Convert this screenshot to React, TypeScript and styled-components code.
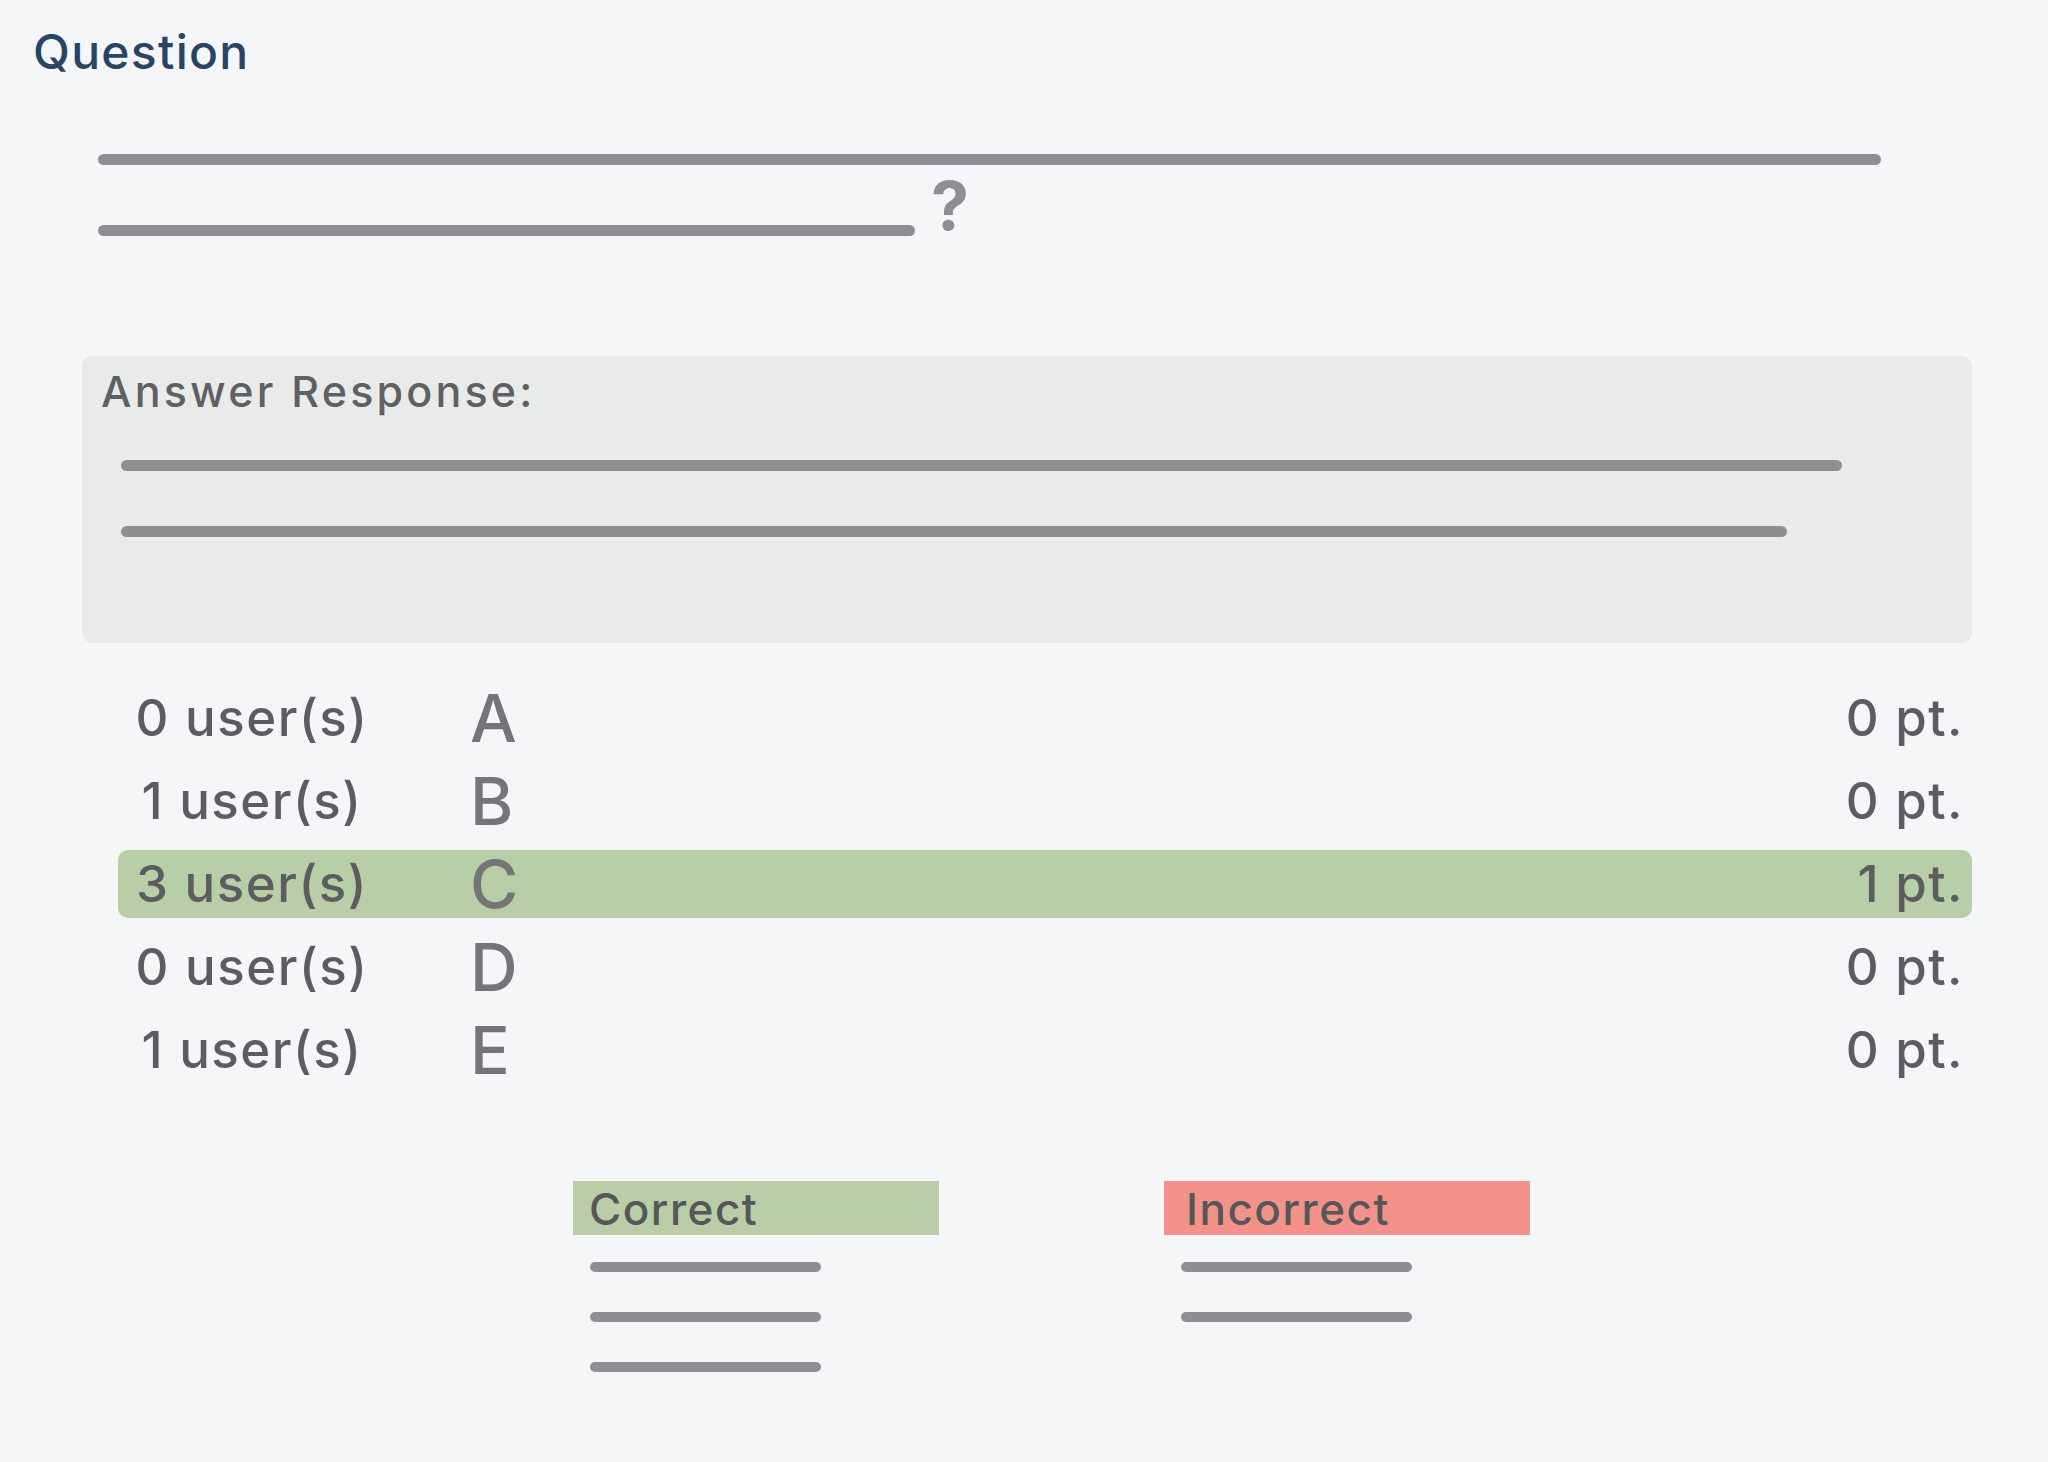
import React from 'react'
import styled, { createGlobalStyle } from 'styled-components'

const GlobalStyle = createGlobalStyle`
  html, body {
    margin: 0;
    padding: 0;
    background: #F5F6F8;
  }
  body {
    font-family: Inter, "Noto Sans", "Liberation Sans", sans-serif;
  }
`

const Data = [
  { users: '0 user(s)', letter: 'A', pts: '0 pt.', correct: false },
  { users: '1 user(s)', letter: 'B', pts: '0 pt.', correct: false },
  { users: '3 user(s)', letter: 'C', pts: '1 pt.', correct: true },
  { users: '0 user(s)', letter: 'D', pts: '0 pt.', correct: false },
  { users: '1 user(s)', letter: 'E', pts: '0 pt.', correct: false },
]

const App: React.FC = () => {
  return (
    <>
      <GlobalStyle />
      <Page>
        <Title>Question</Title>
        <QuestionBlock>
          <Bar w={1783} />
          <QuestionRow>
            <Bar w={817} />
            <Mark>?</Mark>
          </QuestionRow>
        </QuestionBlock>

        <AnswerBox>
          <AnswerLabel>Answer Response:</AnswerLabel>
          <AnswerLines>
            <Bar w={1721} />
            <Bar w={1666} />
          </AnswerLines>
        </AnswerBox>

        <Rows>
          {Data.map((row, i) => (
            <Row key={i} correct={row.correct}>
              <Users>{row.users}</Users>
              <Letter>{row.letter}</Letter>
              <Points>{row.pts}</Points>
            </Row>
          ))}
        </Rows>

        <Legend>
          <LegendCol>
            <Tag bg="#B9CEA7" pad={16}>Correct</Tag>
            <TagLines>
              <Bar w={231} h={10} />
              <Bar w={231} h={10} />
              <Bar w={231} h={10} />
            </TagLines>
          </LegendCol>
          <LegendCol>
            <Tag bg="#F4928A" pad={22}>Incorrect</Tag>
            <TagLines>
              <Bar w={231} h={10} />
              <Bar w={231} h={10} />
            </TagLines>
          </LegendCol>
        </Legend>
      </Page>
    </>
  )
}

export default App

const Page = styled.div`
  width: 2048px;
  min-height: 1462px;
  box-sizing: border-box;
  background: #F5F6F8;
  padding: 23px 0 0 0;
  display: flex;
  flex-direction: column;
`
const Title = styled.div`
  margin-left: 33px;
  font-size: 48px;
  line-height: 1.2;
  font-weight: 500;
  color: #2A4466;
  letter-spacing: 1.3px;
`
const QuestionBlock = styled.div`
  margin: 73px 0 0 98px;
  display: flex;
  flex-direction: column;
  gap: 6px;
`
const Bar = styled.div<{ w: number; h?: number }>`
  width: ${(p) => p.w}px;
  height: ${(p) => p.h ?? 11}px;
  border-radius: 6px;
  background: #8E8F93;
  flex-shrink: 0;
`
const QuestionRow = styled.div`
  display: flex;
  align-items: flex-end;
  & > ${Bar} {
    margin-bottom: 3px;
  }
`
const Mark = styled.div`
  margin-left: 16px;
  font-size: 68px;
  line-height: 1;
  font-weight: 700;
  color: #8E8F93;
`
const AnswerBox = styled.div`
  margin: 117px 0 0 82px;
  width: 1890px;
  height: 287px;
  box-sizing: border-box;
  padding: 10px 0 0 19px;
  background: #E9EBEA;
  border-radius: 10px;
`
const AnswerLabel = styled.div`
  font-size: 43px;
  line-height: 1.2;
  font-weight: 500;
  color: #5E6062;
  letter-spacing: 3.2px;
`
const AnswerLines = styled.div`
  margin: 43px 0 0 20px;
  display: flex;
  flex-direction: column;
  gap: 55px;
`
const Rows = styled.div`
  margin: 41px 0 0 118px;
  width: 1854px;
  display: flex;
  flex-direction: column;
  gap: 15px;
`
const Row = styled.div<{ correct: boolean }>`
  height: 68px;
  display: flex;
  align-items: center;
  padding-right: 8px;
  border-radius: 10px;
  background: ${(p) => (p.correct ? '#B8CEA6' : 'transparent')};
  color: #5B5D60;
`
const Users = styled.div`
  width: 268px;
  text-align: center;
  font-size: 51px;
  line-height: 68px;
  font-weight: 500;
  letter-spacing: 1.5px;
`
const Letter = styled.div`
  margin-left: 84px;
  flex: 1;
  font-size: 66px;
  line-height: 68px;
  font-weight: 500;
  color: #737579;
`
const Points = styled.div`
  font-size: 51px;
  line-height: 68px;
  font-weight: 500;
  letter-spacing: 1.5px;
`
const Legend = styled.div`
  margin: 97px 0 0 573px;
  display: flex;
  gap: 225px;
`
const LegendCol = styled.div`
  display: flex;
  flex-direction: column;
`
const Tag = styled.div<{ bg: string; pad: number }>`
  width: 366px;
  height: 54px;
  box-sizing: border-box;
  padding: 2px 0 0 ${(p) => p.pad}px;
  background: ${(p) => p.bg};
  font-size: 44px;
  line-height: 52px;
  font-weight: 500;
  color: #55575A;
  letter-spacing: 1.5px;
`
const TagLines = styled.div`
  margin: 27px 0 0 17px;
  display: flex;
  flex-direction: column;
  gap: 40px;
`
